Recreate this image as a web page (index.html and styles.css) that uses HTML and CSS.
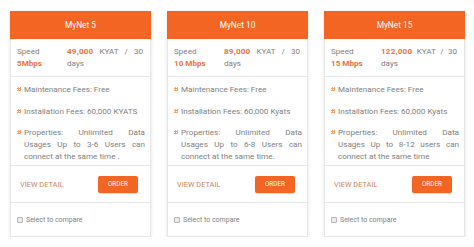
FILE: index.html
```html
<!DOCTYPE html>
<html>
<head>
<meta charset="utf-8">
<link rel="stylesheet" href="styles.css">
</head>
<body>
<div class="plans">
  <div class="card">
    <div class="head">MyNet 5</div>
    <div class="speed">
      <div class="sp"><div>Speed</div><div class="hl">5Mbps</div></div>
      <div class="price"><b class="num">49,000</b> <span>KYAT / 30</span> <span>days</span></div>
    </div>
    <ul class="feats">
      <li>Maintenance Fees: Free</li>
      <li>Installation Fees: 60,000 KYATS</li>
      <li>Properties: Unlimited Data Usages Up to 3-6 Users can connect at the same time .</li>
    </ul>
    <div class="actions"><span class="detail">VIEW DETAIL</span><span class="order">ORDER</span></div>
    <label class="compare"><span class="box"></span>Select to compare</label>
  </div>
  <div class="card">
    <div class="head">MyNet 10</div>
    <div class="speed">
      <div class="sp"><div>Speed</div><div class="hl">10 Mbps</div></div>
      <div class="price"><b class="num">89,000</b> <span>KYAT / 30</span> <span>days</span></div>
    </div>
    <ul class="feats">
      <li>Maintenance Fees: Free</li>
      <li>Installation Fees: 60,000 Kyats</li>
      <li>Properties: Unlimited Data Usages Up to 6-8 Users can connect at the same time.</li>
    </ul>
    <div class="actions"><span class="detail">VIEW DETAIL</span><span class="order">ORDER</span></div>
    <label class="compare"><span class="box"></span>Select to compare</label>
  </div>
  <div class="card">
    <div class="head">MyNet 15</div>
    <div class="speed">
      <div class="sp"><div>Speed</div><div class="hl">15 Mbps</div></div>
      <div class="price"><b class="num">122,000</b> <span>KYAT / 30</span> <span>days</span></div>
    </div>
    <ul class="feats">
      <li>Maintenance Fees: Free</li>
      <li>Installation Fees: 60,000 Kyats</li>
      <li>Properties: Unlimited Data Usages Up to 8-12 users can connect at the same time</li>
    </ul>
    <div class="actions"><span class="detail">VIEW DETAIL</span><span class="order">ORDER</span></div>
    <label class="compare"><span class="box"></span>Select to compare</label>
  </div>
</div>
</body>
</html>
```
FILE: styles.css
```css
* { box-sizing: border-box; }
html, body { margin: 0; background: #fff; }
body {
  padding: 11px 0 0 10px;
  font-family: Roboto, "Open Sans", sans-serif;
  font-size: 8.1px;
  color: #808080;
}
.plans { display: flex; gap: 16px; }
.card {
  width: 141px;
  border: 1px solid #e6e6e6;
  box-shadow: 0 1px 3px rgba(0,0,0,0.12);
  background: #fff;
  display: flex;
  flex-direction: column;
}
.head {
  background: #f26522;
  color: #fff;
  height: 28px;
  display: flex;
  align-items: center;
  justify-content: center;
  font-size: 8.3px;
  margin: -1px -1px 0;
}
.speed {
  display: flex;
  height: 38px;
  padding: 7px 7px 0 6px;
  border-bottom: 1px solid #e6e6e6;
  line-height: 11.5px;
}
.sp { width: 50px; }
.hl { color: #e4743c; font-weight: bold; }
.num { color: #e4743c; font-weight: bold; letter-spacing: 0.2px; }
.price { flex: 1; text-align: justify; }
.feats {
  list-style: none;
  margin: 0;
  padding: 6px 5px 0 13px;
  height: 89px;
  border-bottom: 1px solid #e6e6e6;
  line-height: 12px;
}
.feats li {
  position: relative;
  text-align: justify;
  margin-bottom: 9.5px;
}
.feats li::before {
  content: "";
  position: absolute;
  left: -7px;
  top: 4px;
  width: 4px;
  height: 4px;
  background:
    linear-gradient(#f2a46a, #f2a46a) 1px 0/1px 4px no-repeat,
    linear-gradient(#f2a46a, #f2a46a) 3px 0/1px 4px no-repeat,
    linear-gradient(#f2a46a, #f2a46a) 0 1px/4px 1px no-repeat,
    linear-gradient(#f2a46a, #f2a46a) 0 3px/4px 1px no-repeat;
}
.actions {
  height: 37px;
  display: flex;
  align-items: center;
  justify-content: space-between;
  padding: 0 12px 0 9px;
  border-bottom: 1px solid #e6e6e6;
}
.detail { color: #c98466; font-size: 7.4px; }
.order {
  background: #f26522;
  color: #fff;
  width: 40px;
  height: 17px;
  display: flex;
  align-items: center;
  justify-content: center;
  font-size: 6.4px;
  border-radius: 2px;
  box-shadow: 0 1px 1px rgba(0,0,0,0.12);
}
.compare {
  height: 33px;
  display: flex;
  align-items: center;
  padding-left: 6px;
  font-size: 7px;
  color: #808080;
}
.box {
  width: 6px;
  height: 6px;
  border: 1px solid #b5b5b5;
  background: #ececec;
  margin-right: 3px;
  border-radius: 1px;
}
```
